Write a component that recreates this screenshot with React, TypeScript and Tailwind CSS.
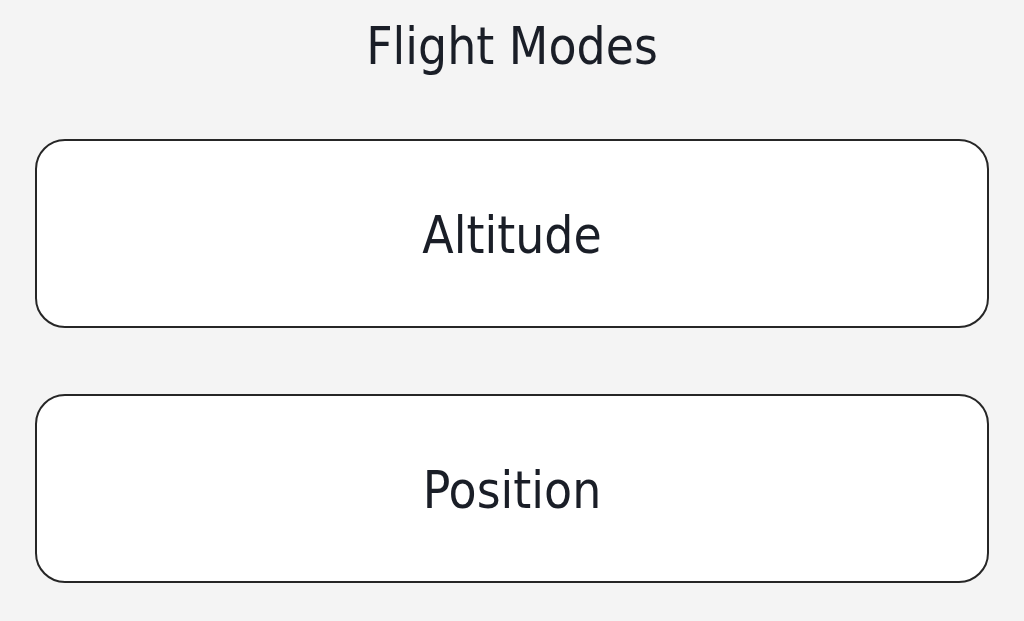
import React from "react";

export default function App() {
  return (
    <div className="w-[1024px] h-[621px] overflow-hidden bg-[#f4f4f4] font-['DejaVu_Sans',sans-serif] font-stretch-condensed text-[#1a1e27]">
      <div className="h-[90px] flex items-center justify-center text-[51px] leading-none pt-[3px]">
        Flight Modes
      </div>
      <div className="flex flex-col gap-[66px] pl-[35px] pt-[49px]">
        <button className="w-[954px] h-[189px] rounded-[30px] border-[2.5px] border-[#262626] bg-white flex items-center justify-center text-[51px] leading-none pt-[3px]">
          Altitude
        </button>
        <button className="w-[954px] h-[189px] rounded-[30px] border-[2.5px] border-[#262626] bg-white flex items-center justify-center text-[51px] leading-none pt-[3px]">
          Position
        </button>
      </div>
    </div>
  );
}
